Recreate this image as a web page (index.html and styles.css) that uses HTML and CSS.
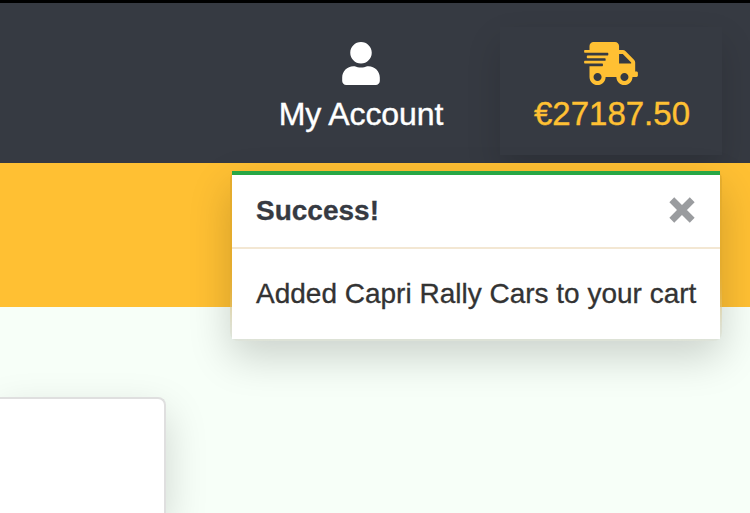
FILE: index.html
```html
<!DOCTYPE html>
<html lang="en">
<head>
<meta charset="utf-8">
<title>Cart</title>
<link rel="stylesheet" href="styles.css">
</head>
<body>
<header class="nav">
  <a class="nav-item account">
    <svg class="icon" width="38" height="43" viewBox="0 0 448 512"><path fill="currentColor" d="M224 256c70.7 0 128-57.3 128-128S294.7 0 224 0 96 57.3 96 128s57.3 128 128 128zm89.6 32h-16.7c-22.2 10.2-46.9 16-73.6 16s-51.3-5.8-73.6-16h-16.7C60.2 288 0 348.2 0 422.4V464c0 26.5 21.5 48 48 48h352c26.5 0 48-21.5 48-48v-41.6c0-74.2-60.2-134.4-134.4-134.4z"/></svg>
    <span class="account-label">My Account</span>
  </a>
  <a class="nav-item cart">
    <svg class="icon" width="54" height="43" viewBox="0 0 640 512"><path fill="currentColor" d="M624 352h-16V243.9c0-12.7-5.1-24.9-14.1-33.9L494 110.1c-9-9-21.2-14.1-33.9-14.1H416V48c0-26.5-21.5-48-48-48H112C85.5 0 64 21.5 64 48v48H8c-4.4 0-8 3.6-8 8v16c0 4.4 3.6 8 8 8h272c4.4 0 8 3.6 8 8v16c0 4.4-3.6 8-8 8H40c-4.4 0-8 3.6-8 8v16c0 4.4 3.6 8 8 8h208c4.4 0 8 3.6 8 8v16c0 4.4-3.6 8-8 8H8c-4.4 0-8 3.6-8 8v16c0 4.4 3.6 8 8 8h208c4.4 0 8 3.6 8 8v16c0 4.4-3.6 8-8 8H64v128c0 53 43 96 96 96s96-43 96-96h128c0 53 43 96 96 96s96-43 96-96h48c8.8 0 16-7.2 16-16v-32c0-8.8-7.2-16-16-16zM160 464c-26.5 0-48-21.5-48-48s21.5-48 48-48 48 21.5 48 48-21.5 48-48 48zm320 0c-26.5 0-48-21.5-48-48s21.5-48 48-48 48 21.5 48 48-21.5 48-48 48zm80-208H416V144h44.1l99.9 99.9V256z"/></svg>
    <span class="cart-total">€27187.50</span>
  </a>
</header>
<div class="banner"></div>
<main class="content"><div class="card"></div></main>
<div class="toast">
  <div class="toast-header">
    <strong class="toast-title">Success!</strong>
    <svg class="close" width="26" height="26" viewBox="0 0 26 26"><path d="M2.8 2.8L23.2 23.2M23.2 2.8L2.8 23.2" stroke="currentColor" stroke-width="6.9"/></svg>
  </div>
  <div class="toast-body"><span class="toast-text">Added Capri Rally Cars to your cart</span></div>
</div>
</body>
</html>
```
FILE: styles.css
```css
* { box-sizing: border-box; }
body {
  margin: 0;
  height: 513px;
  overflow: hidden;
  display: flex;
  flex-direction: column;
  background: #f7fff8;
  font-family: "Liberation Sans", Arial, sans-serif;
}
.nav {
  height: 163px;
  flex: none;
  display: flex;
  justify-content: flex-end;
  align-items: flex-start;
  gap: 24px;
  padding: 24px 28px 0 0;
  border-top: 3px solid #000;
  background: #363a42;
  overflow: hidden;
}
.nav-item {
  height: 128px;
  padding-top: 15px;
  display: flex;
  flex-direction: column;
  align-items: center;
  font-size: 32px;
  line-height: 48px;
  white-space: nowrap;
  -webkit-text-stroke: .4px currentColor;
}
.icon { display: block; margin-bottom: 5px; }
.account { width: 230px; color: #fff; }
.account-label { letter-spacing: -.1px; }
.cart {
  width: 222px;
  color: #ffc033;
  box-shadow: 0 16px 32px rgba(0, 0, 0, .15);
}
.cart-total { font-size: 33px; padding-left: 2px; }
.banner { flex: none; height: 144px; background: #ffc033; }
.content { flex: 1; padding-top: 90px; display: flex; overflow: hidden; }
.card {
  width: 166px;
  background: #fff;
  border: 2px solid #dfdfdf;
  border-width: 2px 2px 0 0;
  border-radius: 0 8px 0 0;
  box-shadow: 0 16px 42px rgba(0, 0, 0, .17);
}
.toast {
  position: absolute;
  top: 171px;
  right: 28px;
  width: 492px;
  border: 2px solid rgba(0, 0, 0, .1);
  border-top: 0;
  border-radius: 8px;
  box-shadow: 0 16px 42px rgba(0, 0, 0, .18);
  backdrop-filter: blur(20px);
}
.toast-header {
  height: 78px;
  padding: 0 24px;
  display: flex;
  align-items: center;
  justify-content: space-between;
  background: #fff;
  border-top: 4px solid #28a745;
  border-bottom: 2px solid #f3e7d3;
  color: #363a42;
}
.toast-title { font-size: 28px; line-height: 42px; -webkit-text-stroke: .3px currentColor; }
.close { color: #9a9c9f; margin-top: -2px; margin-right: 1px; }
.toast-body {
  height: 90px;
  padding: 24px;
  background: #fff;
  color: #333;
  font-size: 28px;
  line-height: 42px;
  white-space: nowrap;
  -webkit-text-stroke: .3px currentColor;
}
```
